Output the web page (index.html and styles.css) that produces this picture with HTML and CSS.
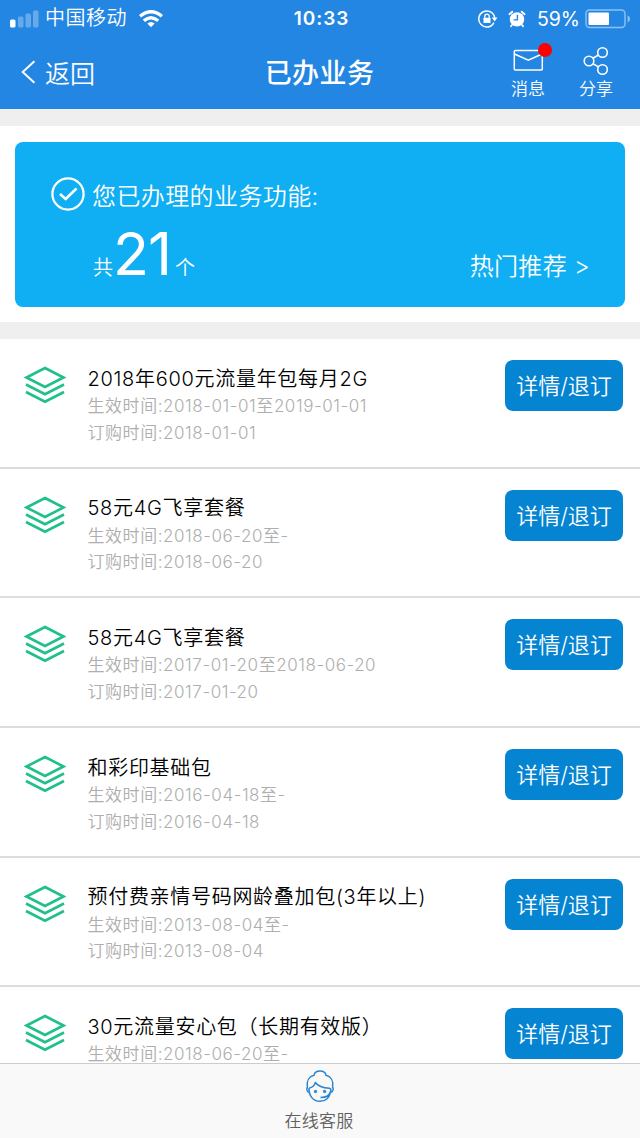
FILE: index.html
```html
<!DOCTYPE html>
<html lang="zh-CN">
<head>
<meta charset="utf-8">
<title>已办业务</title>
<link rel="stylesheet" href="styles.css">
</head>
<body>
<svg class="defs" width="0" height="0" aria-hidden="true">
  <symbol id="layers" viewBox="0 0 42 38">
    <path d="M21 2 L39.500 11.500 L21 21 L2.500 11.500 Z M2 18.500 L21 28.200 L40 18.500 M2 26 L21 35.700 L40 26" fill="none" stroke="#1fc08a" stroke-width="2.600"/>
  </symbol>
</svg>
<header class="header">
  <div class="status">
    <div class="status-left">
      <svg class="signal" width="29" height="18" viewBox="0 0 29 18" fill="#fff">
        <rect x="0" y="9.500" width="5.500" height="8" rx="1.500"/>
        <g opacity=".3"><rect x="8" y="6.500" width="5.500" height="11" rx="1.500"/><rect x="15.500" y="3.500" width="5.500" height="14" rx="1.500"/><rect x="23" y="0.500" width="5.500" height="17" rx="1.500"/></g>
      </svg>
      <span class="carrier">中国移动</span>
      <svg class="wifi" width="24" height="18" viewBox="0 0 24 18" fill="none" stroke="#fff" stroke-width="3.400">
        <path d="M1 6.300 Q12 -2.900 23 6.300"/><path d="M4.800 10.700 Q12 4.600 19.200 10.700"/><path d="M8.300 13.600 Q12 10.200 15.700 13.600 L12 17.300Z" fill="#fff" stroke="none"/>
      </svg>
    </div>
    <span class="clock">10:33</span>
    <div class="status-right">
      <svg width="20" height="18" viewBox="0 0 20 18" fill="none" stroke="#fff" stroke-width="1.500">
        <path d="M15.900 12.600 A8 8 0 1 1 16.700 8"/><path d="M13.800 7.500h5.700l-2.900 4z" fill="#fff" stroke="none"/><rect x="5.500" y="7.700" width="7" height="5.300" rx=".6" fill="#fff" stroke="none"/><path d="M6.800 8V6.300a2.200 2.200 0 0 1 4.400 0V8" stroke-width="1.300"/>
      </svg>
      <svg class="alarm" width="18" height="18" viewBox="0 0 18 18">
        <circle cx="9" cy="9.400" r="7.200" fill="#fff"/><path d="M1.400 4.200 L4.300 1.700 M16.600 4.200 L13.700 1.700 M4 15 L3 16.200 M14 15 L15 16.200" stroke="#fff" stroke-width="1.800" stroke-linecap="round"/><path d="M9.400 4.800V9.900H5.600" fill="none" stroke="#2386e2" stroke-width="1.400"/>
      </svg>
      <span class="percent">59%</span>
      <svg class="battery" width="46" height="20" viewBox="0 0 46 20">
        <rect x="1" y="1" width="39" height="17.500" rx="3.500" fill="none" stroke="#8fc2f1" stroke-width="1.400"/><rect x="3.500" y="3.500" width="20.500" height="12.500" rx="1" fill="#fff"/><path d="M42.600 6.300q2.400 1 2.400 3.600t-2.400 3.600z" fill="#8fc2f1"/>
      </svg>
    </div>
  </div>
  <nav class="nav">
    <a class="back"><svg width="15" height="24" viewBox="0 0 15 24"><path d="M13.400 1.300 L1.700 12 L13.400 22.700" fill="none" stroke="#fff" stroke-width="1.900"/></svg><span>返回</span></a>
    <h1 class="page-title">已办业务</h1>
    <div class="actions">
      <a class="action">
        <svg width="32" height="32" viewBox="0 0 32 32" fill="none" stroke="#fff" stroke-width="1.500"><rect x="2.300" y="5.400" width="28" height="19.500" rx="1"/><path d="M2.500 9 L16.300 15.200 L30 9"/></svg>
        <span>消息</span><i class="dot"></i>
      </a>
      <a class="action">
        <svg width="32" height="32" viewBox="0 0 32 32" fill="none" stroke="#fff" stroke-width="1.600"><circle cx="9" cy="16" r="4.800"/><circle cx="22.500" cy="7.500" r="4.800"/><circle cx="22.500" cy="24.500" r="4.800"/><path d="M12.900 13.300 L18.500 10 M12.900 18.700 L18.500 21.900"/></svg>
        <span>分享</span>
      </a>
    </div>
  </nav>
</header>
<section class="summary">
  <div class="card">
    <div class="card-head">
      <svg width="34" height="34" viewBox="0 0 34 34" fill="none" stroke="#fff"><circle cx="17" cy="17" r="15.600" stroke-width="2.300"/><path d="M9 17 L14.700 22 L25.500 11.500" stroke-width="2.600"/></svg>
      <span>您已办理的业务功能:</span>
    </div>
    <div class="card-foot">
      <div class="count"><span>共</span><b>21</b><span>个</span></div>
      <a class="hot">热门推荐 &gt;</a>
    </div>
  </div>
</section>
<main class="list">
  <article class="row"><svg class="layers"><use href="#layers"/></svg><div class="info"><h2>2018年600元流量年包每月2G</h2><p>生效时间:2018-01-01至2019-01-01</p><p>订购时间:2018-01-01</p></div><a class="btn">详情/退订</a></article>
  <article class="row"><svg class="layers"><use href="#layers"/></svg><div class="info"><h2>58元4G飞享套餐</h2><p>生效时间:2018-06-20至-</p><p>订购时间:2018-06-20</p></div><a class="btn">详情/退订</a></article>
  <article class="row"><svg class="layers"><use href="#layers"/></svg><div class="info"><h2>58元4G飞享套餐</h2><p>生效时间:2017-01-20至2018-06-20</p><p>订购时间:2017-01-20</p></div><a class="btn">详情/退订</a></article>
  <article class="row"><svg class="layers"><use href="#layers"/></svg><div class="info"><h2>和彩印基础包</h2><p>生效时间:2016-04-18至-</p><p>订购时间:2016-04-18</p></div><a class="btn">详情/退订</a></article>
  <article class="row"><svg class="layers"><use href="#layers"/></svg><div class="info"><h2>预付费亲情号码网龄叠加包(3年以上)</h2><p>生效时间:2013-08-04至-</p><p>订购时间:2013-08-04</p></div><a class="btn">详情/退订</a></article>
  <article class="row"><svg class="layers"><use href="#layers"/></svg><div class="info"><h2>30元流量安心包（长期有效版）</h2><p>生效时间:2018-06-20至-</p></div><a class="btn">详情/退订</a></article>
</main>
<footer class="service">
  <svg width="32" height="34" viewBox="0 0 32 34" fill="none" stroke="#2a85ce" stroke-width="1.500" stroke-linejoin="round">
    <path d="M5.500 23.500 C2.500 23 2.500 19.500 3.400 18 C2.500 12 5 7.500 10 6.300 C11 0.500 21 0.500 22 6.300 C27 7.500 29.500 12 28.600 18 C29.500 19.500 29.500 23 26.500 23.500"/>
    <path d="M5.200 19 C8.500 18.500 10.500 16.500 11.400 13.500 C14 17.300 20 19 25.500 19.300 Q27.300 19.500 26.700 22"/>
    <path d="M5 19 C4.800 27 9 32.300 16 32.300 C22 32.300 25.800 28.500 26.700 22 Q25.500 28.500 16.500 28.500"/>
    <circle cx="11.500" cy="22.500" r="1.200" fill="#2a85ce" stroke-width="1"/><circle cx="20.600" cy="22.500" r="1.200" fill="#2a85ce" stroke-width="1"/>
  </svg>
  <span>在线客服</span>
</footer>
</body>
</html>
```

FILE: styles.css
```css
* { box-sizing: border-box; margin: 0; padding: 0; }
body {
  width: 640px; height: 1138px; overflow: hidden;
  display: flex; flex-direction: column;
  background: #fff; color: #000;
  font-family: Inter, "Noto Sans CJK SC", sans-serif;
  font-weight: 350;
  white-space: nowrap;
}
svg { display: block; flex: none; }
.defs { position: absolute; }
.header { flex: none; height: 109px; background: #2386e2; color: #fff; }
.status { height: 36px; display: grid; grid-template-columns: 1fr auto 1fr; align-items: center; padding: 0 9px 0 10px; }
.status-left, .status-right { display: flex; align-items: center; }
.status-right { justify-content: flex-end; height: 35px; }
.carrier { font-size: 20px; letter-spacing: .5px; margin-left: 6px; line-height: 37px; }
.wifi { margin-left: 12px; }
.clock { font-size: 19px; font-weight: 600; letter-spacing: .9px; line-height: 36px; padding-left: 2px; }
.alarm { margin-left: 10px; }
.percent { font-size: 19.500px; font-weight: 400; margin-left: 11px; }
.battery { margin-left: 5px; }
.nav { height: 73px; display: grid; grid-template-columns: 1fr auto 1fr; padding: 0 24px 0 21px; }
.back { display: flex; align-items: center; height: 71px; font-size: 25px; gap: 9px; }
.page-title { font-size: 27px; font-weight: 500; line-height: 75px; letter-spacing: .4px; padding-left: 2px; }
.actions { display: flex; justify-content: flex-end; gap: 30px; padding: 9px 1px 0 0; }
.action { width: 38px; position: relative; display: flex; flex-direction: column; align-items: center; font-size: 17px; line-height: 24px; }
.dot { position: absolute; left: 29px; top: -2px; width: 14px; height: 14px; border-radius: 50%; background: #f00; }
.summary { flex: none; height: 230px; border-top: 17px solid #efefef; border-bottom: 17px solid #efefef; padding: 16px 15px; }
.card { height: 165px; border-radius: 8px; background: #10aef2; color: #fff; padding: 35px 36px 0; }
.card-head { display: flex; align-items: center; gap: 7px; height: 34px; font-size: 24px; letter-spacing: .4px; }
.card-foot { display: flex; justify-content: space-between; padding-left: 42px; align-items: baseline; line-height: 86px; }
.count { font-size: 20px; }
.count b { font-size: 59px; font-weight: 400; letter-spacing: -1px; margin: 0 4px 0 0; }
.hot { font-size: 24px; letter-spacing: .3px; margin-right: -1px; }
.list { flex: 1; min-height: 0; overflow: hidden; }
.row { height: 129.7px; border-bottom: 2px solid #ddd; display: flex; align-items: flex-start; padding: 21px 17px 0 24px; }
.layers { width: 42px; height: 38px; margin-top: 6px; }
.info { flex: 1; margin-left: 21.500px; padding-top: 4.500px; font-variation-settings: "wght" 400; }
.info h2 { font-size: 20px; font-weight: 350; line-height: 28.500px; letter-spacing: .7px; }
.info p { font-size: 17px; line-height: 26.500px; color: #aeaeae; letter-spacing: .55px; }
.btn { width: 118px; height: 51px; border-radius: 8px; background: #0584d2; color: #fff; font-size: 22px; line-height: 52px; text-align: center; }
.service { flex: none; height: 75px; background: #f9f9f9; border-top: 1px solid #ccc; display: flex; flex-direction: column; align-items: center; padding-top: 5px; font-size: 17px; line-height: 37px; color: #606060; letter-spacing: .2px; }
.service span { margin-right: 2px; }
```
